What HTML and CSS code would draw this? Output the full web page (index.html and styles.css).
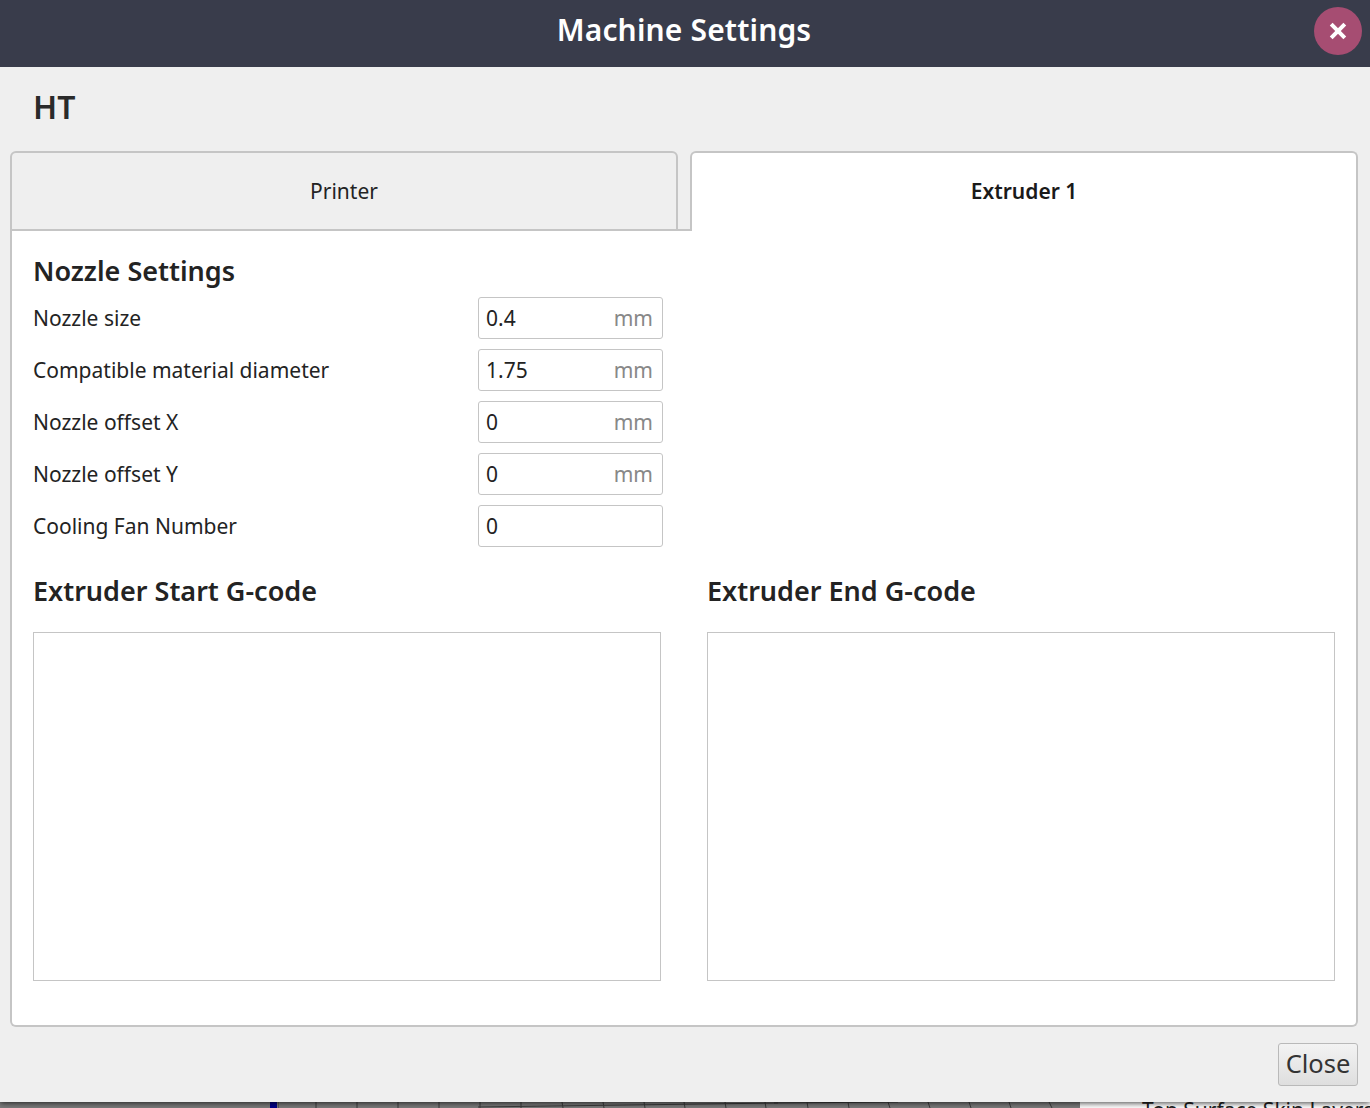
FILE: index.html
```html
<!DOCTYPE html>
<html lang="en">
<head>
<meta charset="utf-8">
<title>Machine Settings</title>
<link rel="stylesheet" href="styles.css">
</head>
<body>
<div class="dialog">
  <header class="titlebar">
    <h1 class="title">Machine Settings</h1>
    <button class="close-x" aria-label="Close">
      <svg width="20" height="20" viewBox="0 0 20 20"><path d="M3.2 3.2L16.8 16.8M16.8 3.2L3.2 16.8" stroke="#fff" stroke-width="4"/></svg>
    </button>
  </header>
  <div class="printer-name">HT</div>
  <div class="tabs">
    <div class="tab">Printer</div>
    <div class="tab-gap"></div>
    <div class="tab active">Extruder 1</div>
  </div>
  <main class="panel">
    <h2 class="section">Nozzle Settings</h2>
    <div class="fields">
      <div class="field"><label>Nozzle size</label><div class="input"><span>0.4</span><span class="unit">mm</span></div></div>
      <div class="field"><label>Compatible material diameter</label><div class="input"><span>1.75</span><span class="unit">mm</span></div></div>
      <div class="field"><label>Nozzle offset X</label><div class="input"><span>0</span><span class="unit">mm</span></div></div>
      <div class="field"><label>Nozzle offset Y</label><div class="input"><span>0</span><span class="unit">mm</span></div></div>
      <div class="field"><label>Cooling Fan Number</label><div class="input"><span>0</span></div></div>
    </div>
    <div class="gcode">
      <section><h2 class="section">Extruder Start G-code</h2><div class="code"></div></section>
      <section><h2 class="section">Extruder End G-code</h2><div class="code"></div></section>
    </div>
  </main>
  <footer class="footer"><button class="close-btn">Close</button></footer>
</div>
<div class="backdrop">
  <div class="viewport">
    <span class="bar"></span>
    <svg class="grid" width="810" height="6" viewBox="0 0 810 6"><path d="M0 0V6M38 0L38 6M79 0V6M120 0V6M161 0V6M202 0V6M243 0V6M284 0L285 6M325 0L326 6M366 0L367 6M406 0L407 6M447 0L448 6M487 0L488 6M529 0L530 6M570 0L571 6M610 0L612 6M650 0L652 6M691 0L693 6M731 0L733 6M771 0L774 6" stroke="#3c3c3c" stroke-width="1" fill="none"/><path d="M200 5L500 1M496 1L620 0" stroke="#3c3c3c" stroke-width="1" fill="none"/></svg>
  </div>
  <div class="side"><span class="peek">Top Surface Skin Layers</span></div>
</div>
</body>
</html>
```
FILE: styles.css
```css
* { box-sizing: border-box; }
html, body { margin: 0; height: 1108px; overflow: hidden; }
body { font-family: "Noto Sans", sans-serif; color: #232323; background: #fff; display: flex; flex-direction: column; }
.dialog { height: 1102px; background: #efefef; display: flex; flex-direction: column; flex: none; position: relative; z-index: 1; box-shadow: 0 1px 6px rgba(0,0,0,.75); }
.titlebar { height: 67px; flex: none; background: #393c4b; display: flex; align-items: center; justify-content: center; position: relative; padding: 0 2px 7px 0; }
.title { margin: 0; font-size: 30px; font-weight: 600; color: #fff; line-height: 1; letter-spacing: .15px; }
.close-x { position: absolute; left: 1314px; top: 7px; width: 48px; height: 48px; border: 0; border-radius: 50%; background: #a64d72; display: flex; align-items: center; justify-content: center; padding: 0; }
.printer-name { height: 84px; flex: none; padding: 19px 0 0 33px; font-size: 32px; font-weight: 600; line-height: 41px; color: #2a2a2a; }
.tabs { display: flex; height: 80px; flex: none; padding: 0 12px 0 10px; position: relative; z-index: 1; }
.tab { width: 668px; height: 80px; flex: none; border: 2px solid #c5c5c5; border-radius: 6px 6px 0 0; background: #efefef; display: flex; align-items: center; justify-content: center; font-size: 21px; padding-bottom: 1px; }
.tab-gap { width: 12px; flex: none; height: 80px; border-bottom: 2px solid #c5c5c5; }
.tab.active { background: #fff; border-bottom: 0; font-weight: 600; color: #1a1a1a; padding-bottom: 2px; }
.panel { width: 1348px; height: 798px; margin: -2px 0 0 10px; flex: none; background: #fff; border: 2px solid #c5c5c5; border-top: 0; border-radius: 0 0 6px 6px; padding: 24px 21px 0; }
.section { margin: 0; font-size: 27px; font-weight: 600; line-height: 36px; color: #232323; }
.fields { margin-top: 8px; display: flex; flex-direction: column; gap: 10px; }
.field { display: flex; align-items: center; height: 42px; }
.field label { width: 445px; flex: none; font-size: 21px; }
.input { width: 185px; height: 42px; border: 1px solid #c5c5c5; border-radius: 3px; background: #fff; display: flex; align-items: center; justify-content: space-between; padding: 0 9px 0 7px; font-size: 21px; line-height: 28px; }
.unit { color: #888; font-size: 21px; }
.gcode { display: flex; gap: 46px; margin-top: 26px; }
.gcode section { width: 628px; flex: none; }
.code { margin-top: 23px; height: 349px; border: 1px solid #c5c5c5; background: #fff; }
.footer { flex: 1; display: flex; justify-content: flex-end; align-items: flex-start; padding: 16px 12px 0 0; }
.close-btn { width: 80px; height: 43px; font-family: inherit; font-size: 25.5px; line-height: 1; color: #333; background: linear-gradient(#f3f3f3, #dedede); border: 1px solid #b9b9b9; border-radius: 3px; padding: 0 0 2px; }
.backdrop { flex: 1; display: flex; overflow: hidden; min-height: 0; }
.viewport { width: 1080px; background: #7c7c7c; position: relative; flex: none; overflow: hidden; }
.bar { position: absolute; left: 270px; top: 0; width: 7px; height: 6px; background: #00008b; }
.grid { position: absolute; left: 278px; top: 0; display: block; }
.side { flex: 1; background: #fff; overflow: hidden; white-space: nowrap; padding-left: 62px; }
.peek { display: block; margin-top: -6px; font-size: 21px; line-height: 28px; }
```
